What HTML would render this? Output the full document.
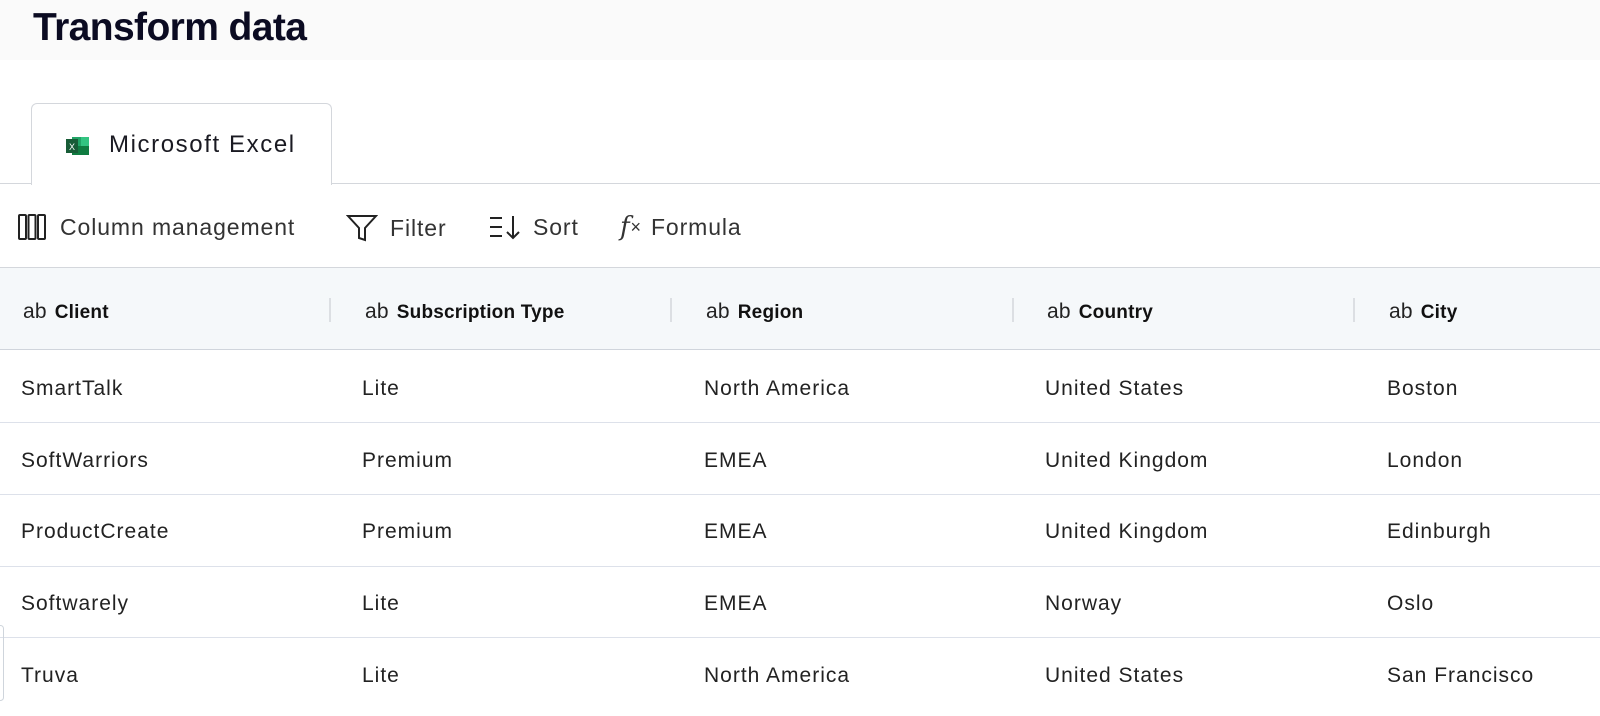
<!DOCTYPE html>
<html><head><meta charset="utf-8"><style>
*{margin:0;padding:0;box-sizing:border-box}
body{width:1600px;height:716px;overflow:hidden;background:#fff;font-family:"Liberation Sans",sans-serif;color:#1e1e24;position:relative}
.top{position:absolute;left:0;top:0;width:1600px;height:60px;background:#fafafa}
h1{position:absolute;left:33px;top:6px;font-size:39px;font-weight:700;color:#0b0b22;letter-spacing:-0.6px}
.tab{position:absolute;left:31px;top:103px;width:301px;height:82px;border:1px solid #d4d7dc;border-bottom:none;border-radius:6px 6px 0 0;background:#fff;z-index:2}
.tab span{position:absolute;left:77px;top:27px;font-size:24px;color:#1a1a22;letter-spacing:1.6px}
.xl{position:absolute;left:34px;top:32px}
.line{position:absolute;left:0;top:183px;width:1600px;height:1px;background:#d4d7dc}
.tb{position:absolute;top:212px;font-size:23px;color:#333;display:flex;align-items:center;letter-spacing:0.9px}
.hdr{position:absolute;left:0;top:267px;width:1600px;height:83px;background:#f5f8fa;border-top:1.5px solid #d4d7dc;border-bottom:1.5px solid #d0d5dc}
.hc{position:absolute;top:300px;font-size:19px;font-weight:700;color:#111;letter-spacing:0.2px}
.hc i{font-style:normal;font-weight:400;font-size:21px;margin-right:8px;color:#222}
.sep{position:absolute;top:298px;width:2px;height:24px;background:#dcdfe3}
.row{position:absolute;left:0;width:1600px;height:1px;background:#dde1ea}
.c{position:absolute;font-size:21px;color:#222;letter-spacing:1px}
</style></head><body>
<div class="top"></div>
<h1>Transform data</h1>
<div class="line"></div>
<div class="tab">
<svg class="xl" width="24" height="20" viewBox="0 0 24 20"><rect x="6" y="1" width="17" height="18" fill="#21a366"/><rect x="15" y="1" width="8" height="18" fill="#33c481"/><rect x="6" y="10" width="17" height="9" fill="#107c41"/><rect x="0" y="3" width="12" height="14" fill="#185c37"/><text x="6" y="14" font-size="9" fill="#fff" text-anchor="middle" font-family="Liberation Sans">X</text></svg>
<span>Microsoft Excel</span></div>
<div class="tb" style="left:17px"><svg width="30" height="30" viewBox="0 0 30 30" fill="none" stroke="#222" stroke-width="2"><rect x="2" y="3" width="7" height="24" rx="1"/><rect x="11.5" y="3" width="7" height="24" rx="1"/><rect x="21" y="3" width="7" height="24" rx="1"/></svg><span style="margin-left:13px">Column management</span></div>
<div class="tb" style="left:346px"><svg width="32" height="32" viewBox="0 0 32 32" fill="none" stroke="#222" stroke-width="2"><path d="M2 4h28L19 16v12l-6-2V16z"/></svg><span style="margin-left:12px">Filter</span></div>
<div class="tb" style="left:489px"><svg width="34" height="30" viewBox="0 0 34 30" fill="none" stroke="#222" stroke-width="2"><path d="M1 6h12M1 15h12M1 24h12M24 4v22M18 20l6 6 6-6"/></svg><span style="margin-left:10px">Sort</span></div>
<div class="tb" style="left:620px"><span style="font-family:'DejaVu Serif',serif;font-style:italic;font-size:26px">f</span><span style="font-size:18px">×</span><span style="margin-left:9px">Formula</span></div>
<div class="hdr"></div>
<div class="hc" style="left:23px"><i>ab</i>Client</div>
<div class="hc" style="left:365px"><i>ab</i>Subscription Type</div>
<div class="hc" style="left:706px"><i>ab</i>Region</div>
<div class="hc" style="left:1047px"><i>ab</i>Country</div>
<div class="hc" style="left:1389px"><i>ab</i>City</div>
<div class="sep" style="left:329px"></div><div class="sep" style="left:670px"></div><div class="sep" style="left:1012px"></div><div class="sep" style="left:1353px"></div>
<div class="row" style="top:422px"></div><div class="row" style="top:494px"></div><div class="row" style="top:566px"></div><div class="row" style="top:637px"></div>
<div style="position:absolute;left:-3px;top:625px;width:7px;height:76px;border:1px solid #cfd5dc;border-radius:4px"></div>

<div class="c" style="left:21px;top:377px">SmartTalk</div><div class="c" style="left:362px;top:377px">Lite</div><div class="c" style="left:704px;top:377px">North America</div><div class="c" style="left:1045px;top:377px">United States</div><div class="c" style="left:1387px;top:377px">Boston</div>
<div class="c" style="left:21px;top:449px">SoftWarriors</div><div class="c" style="left:362px;top:449px">Premium</div><div class="c" style="left:704px;top:449px">EMEA</div><div class="c" style="left:1045px;top:449px">United Kingdom</div><div class="c" style="left:1387px;top:449px">London</div>
<div class="c" style="left:21px;top:520px">ProductCreate</div><div class="c" style="left:362px;top:520px">Premium</div><div class="c" style="left:704px;top:520px">EMEA</div><div class="c" style="left:1045px;top:520px">United Kingdom</div><div class="c" style="left:1387px;top:520px">Edinburgh</div>
<div class="c" style="left:21px;top:592px">Softwarely</div><div class="c" style="left:362px;top:592px">Lite</div><div class="c" style="left:704px;top:592px">EMEA</div><div class="c" style="left:1045px;top:592px">Norway</div><div class="c" style="left:1387px;top:592px">Oslo</div>
<div class="c" style="left:21px;top:664px">Truva</div><div class="c" style="left:362px;top:664px">Lite</div><div class="c" style="left:704px;top:664px">North America</div><div class="c" style="left:1045px;top:664px">United States</div><div class="c" style="left:1387px;top:664px">San Francisco</div>
</body></html>
